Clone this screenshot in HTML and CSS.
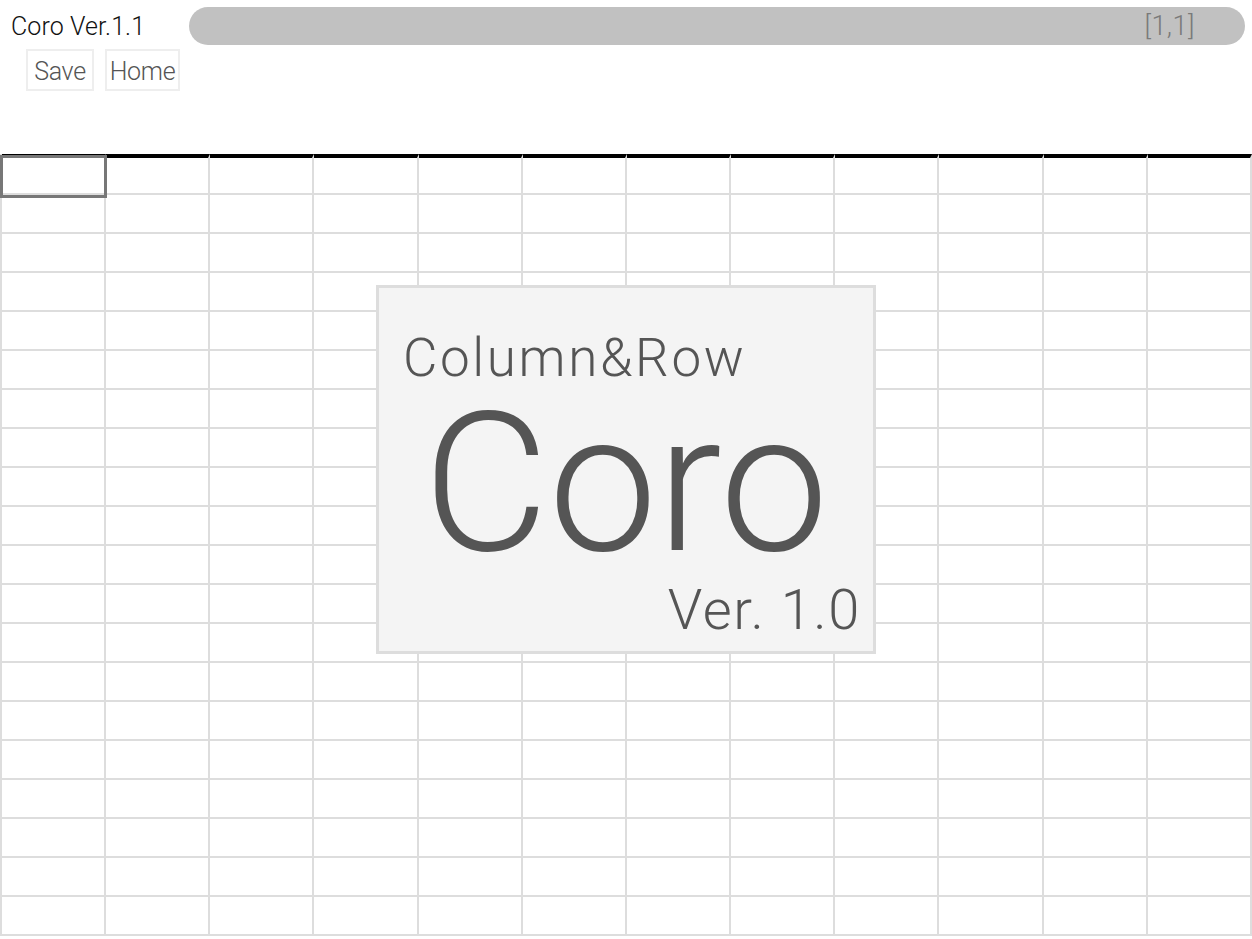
FILE: index.html
```html
<!DOCTYPE html>
<html lang="ja">
<head>
<meta charset="utf-8">
<title>Coro Ver.1.1</title>
<link rel="stylesheet" href="styles.css">
</head>
<body>
<header class="topbar">
  <div class="title">Coro Ver.1.1</div>
  <div class="addr"><span class="pos">[1,1]</span></div>
</header>
<nav class="tools">
  <button class="btn btn-save">Save</button>
  <button class="btn btn-home">Home</button>
</nav>
<main class="sheet" id="sheet">
  <div class="cursor"></div>
</main>
<section class="splash">
  <div class="splash-sub">Column&amp;Row</div>
  <div class="splash-name">Coro</div>
  <div class="splash-ver">Ver. 1.0</div>
</section>
<script src="app.js"></script>
</body>
</html>
```
FILE: styles.css
```css
* { box-sizing: border-box; }
html, body { margin: 0; padding: 0; background: #fff; }
body {
  width: 1252px;
  height: 939px;
  overflow: hidden;
  position: relative;
  font-family: Roboto, "Noto Sans CJK JP", sans-serif;
  color: #222;
}
.topbar {
  display: flex;
  align-items: center;
  height: 52px;
  padding: 7px 7px 7px 11px;
}
.title {
  width: 178px;
  font-size: 25px;
  font-weight: 300;
  letter-spacing: 0.1px;
  color: #111;
  white-space: nowrap;
}
.addr {
  flex: 1;
  height: 38px;
  border-radius: 19px;
  background: #c1c1c1;
  display: flex;
  align-items: center;
  justify-content: flex-end;
  padding-right: 50px;
}
.pos {
  font-size: 27px;
  font-weight: 300;
  color: #7a7a7a;
  letter-spacing: 0.5px;
}
.tools {
  display: flex;
  gap: 11px;
  padding-left: 26px;
  margin-top: -3px;
}
.btn {
  height: 42px;
  border: 2px solid #eee;
  background: #fff;
  font-family: Roboto, "Noto Sans CJK JP", sans-serif;
  font-size: 25px;
  font-weight: 300;
  color: #555;
  padding: 2px 0 0;
  letter-spacing: -0.3px;
}
.btn-save { width: 68px; }
.btn-home { width: 75px; }
.sheet {
  position: absolute;
  left: 0;
  top: 154px;
  width: 1252px;
  display: grid;
  grid-template-columns: repeat(12, 1fr);
  grid-template-rows: 41px;
  grid-auto-rows: 39px;
  border-left: 2px solid #ddd;
}
.cell {
  border-right: 2px solid #ddd;
  border-bottom: 2px solid #ddd;
}
.cell.head {
  border-top: 4px solid #000;
}
.cursor {
  position: absolute;
  left: -2px;
  top: 1px;
  width: 107px;
  height: 43px;
  border: 3px solid #777;
  z-index: 2;
  pointer-events: none;
}
.splash {
  position: absolute;
  left: 376px;
  top: 285px;
  width: 500px;
  height: 369px;
  background: #f4f4f4;
  border: 3px solid #ddd;
  color: #555;
  font-family: Roboto, sans-serif;
  font-weight: 300;
  display: flex;
  flex-direction: column;
}
.splash-sub {
  font-size: 53px;
  line-height: 53px;
  margin: 44px 0 0 24px;
  letter-spacing: 2.6px;
}
.splash-name {
  font-size: 194px;
  line-height: 150px;
  margin: 24px 0 0 44px;
  letter-spacing: -0.5px;
}
.splash-ver {
  font-size: 56px;
  line-height: 44px;
  text-align: right;
  padding-right: 12px;
  margin-top: 29px;
  letter-spacing: 1.6px;
}
```
FILE: app.js
```js
(function () {
  var sheet = document.getElementById('sheet');
  var cols = 12, rows = 20;
  var frag = document.createDocumentFragment();
  for (var r = 0; r < rows; r++) {
    for (var c = 0; c < cols; c++) {
      var d = document.createElement('div');
      d.className = r === 0 ? 'cell head' : 'cell';
      frag.appendChild(d);
    }
  }
  sheet.appendChild(frag);
})();
```
